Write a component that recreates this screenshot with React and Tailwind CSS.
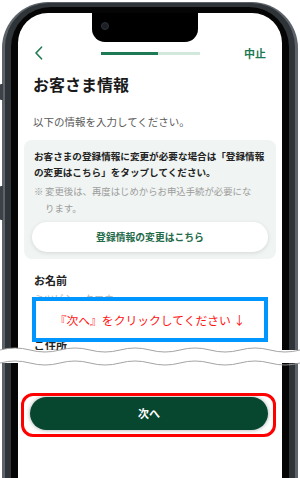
import React from "react";

function wavePath(y, amp, period, width) {
  let d = `M0 ${y} Q${period / 4} ${y - amp * 2} ${period / 2} ${y}`;
  for (let x = period; x <= width + period; x += period / 2) {
    d += ` T${x} ${y}`;
  }
  return d;
}

function Wave() {
  const top = wavePath(6, 2, 60, 300);
  const bottom = wavePath(19, 2, 60, 300);
  return (
    <svg width="300" height="28" viewBox="0 0 300 28" className="block">
      <path d={`${top} L330 19 L0 19 Z`} fill="#ffffff" />
      <rect x="0" y="6" width="300" height="13" fill="#ffffff" />
      <path d={top} fill="none" stroke="#9a9a9a" strokeWidth="0.9" />
      <path d={bottom} fill="none" stroke="#9a9a9a" strokeWidth="0.9" />
    </svg>
  );
}

export default function App() {
  return (
    <div className="relative w-[300px] h-[478px] overflow-hidden bg-white font-['Noto_Sans_CJK_JP',sans-serif]">
      {/* side buttons */}
      <div className="absolute left-0 top-[84px] w-[3px] h-[16px] rounded-l-[1px] bg-[#3c4147]" />
      <div className="absolute left-0 top-[186px] w-[3px] h-[34px] rounded-l-[1px] bg-[#3c4147]" />

      {/* phone frame */}
      <div className="mx-[2px] mt-[2px] h-[520px] rounded-t-[46px] bg-[#5d636a] px-[3px] pt-[1px]">
        <div className="h-full rounded-t-[44px] bg-[#2f3439] px-[6px] pt-[4px]">
          <div className="h-full rounded-t-[40px] bg-[#050505] px-[7px] pt-[6px]">
            <div className="relative h-full rounded-t-[30px] bg-white">
              {/* notch */}
              <div className="absolute left-[74px] top-0 w-[106px] h-[29px] rounded-b-[13px] bg-black">
                <div className="absolute left-[9px] top-[9px] w-[8px] h-[8px] rounded-full bg-[#1c2026] border border-[#2c323a]" />
              </div>

              <div className="pt-[32px]">
                {/* header */}
                <div className="grid grid-cols-[1fr_auto_1fr] items-center h-[16px] pl-[16px] pr-[16px]">
                  <div>
                    <svg width="9" height="14" viewBox="0 0 9 14">
                      <path d="M7.5 1.2 L2 7 L7.5 12.8" fill="none" stroke="#1d7a52" strokeWidth="1.6" strokeLinecap="round" strokeLinejoin="round" />
                    </svg>
                  </div>
                  <div className="flex w-[99px] h-[3px]">
                    <div className="w-[57px] h-full bg-[#1d7a55]" />
                    <div className="flex-1 h-full bg-[#d3e8dd]" />
                  </div>
                  <div className="flex justify-end text-[11px] leading-none font-bold text-[#1d7a52]">中止</div>
                </div>

                {/* title */}
                <div className="mt-[15px] px-[15px] text-[16px] leading-[16px] font-bold text-[#1a1a1a]">お客さま情報</div>

                <div className="mt-[24px] px-[15px] text-[10.5px] leading-[11px] text-[#5a5a5a]">以下の情報を入力してください。</div>

                {/* info box */}
                <div className="mt-[13px] mx-[6px] rounded-[8px] bg-[#f0f4f2] px-[10px] pt-[8px] pb-[7px]">
                  <p className="text-[9.6px] leading-[16px] font-bold text-[#222] whitespace-nowrap">
                    お客さまの登録情報に変更が必要な場合は「登録情報
                    <br />
                    の変更はこちら」をタップしてください。
                  </p>
                  <div className="mt-[3px] flex text-[9.4px] leading-[17px] text-[#9c9c9c] whitespace-nowrap">
                    <span className="w-[11px] shrink-0">※</span>
                    <span>
                      変更後は、再度はじめからお申込手続が必要にな
                      <br />
                      ります。
                    </span>
                  </div>
                  <div className="mt-[5px] -mx-[2px] h-[30px] rounded-full bg-white shadow-[0_1px_4px_rgba(0,0,0,0.12)] flex items-center justify-center text-[9.8px] font-bold text-[#1f6b4a]">
                    登録情報の変更はこちら
                  </div>
                </div>

                {/* form labels */}
                <div className="mt-[16px] px-[16px] text-[11px] leading-[11px] font-bold text-[#222]">お名前</div>
                <div className="mt-[8px] px-[16px] text-[10px] leading-[10px] text-[#b5b5b5]">ミツビシ　タロウ</div>
                <div className="mt-[36px] px-[16px] text-[11px] leading-[11px] font-bold text-[#222]">ご住所</div>

                {/* next button */}
                <div className="mt-[46px] ml-[12px] mr-[14px] h-[33px] rounded-full bg-[#07472f] shadow-[0_0_4px_rgba(0,0,0,0.35)] flex items-center justify-center text-[11px] font-bold text-white">
                  次へ
                </div>
              </div>
            </div>
          </div>
        </div>
      </div>

      {/* blue instruction box */}
      <div className="absolute left-[32px] top-[297px] w-[236px] h-[45px] border-[4.5px] border-[#0096ff] bg-white flex items-center justify-center text-[11.8px] text-[#ff1414] whitespace-nowrap">
        『次へ』をクリックしてください ↓
      </div>

      {/* wave cut */}
      <div className="absolute left-0 top-[344px] w-[300px]">
        <Wave />
      </div>

      {/* red outline */}
      <div className="absolute left-[21px] top-[393px] w-[255px] h-[44px] border-[3px] border-[#ff0000] rounded-[12px]" />
    </div>
  );
}
